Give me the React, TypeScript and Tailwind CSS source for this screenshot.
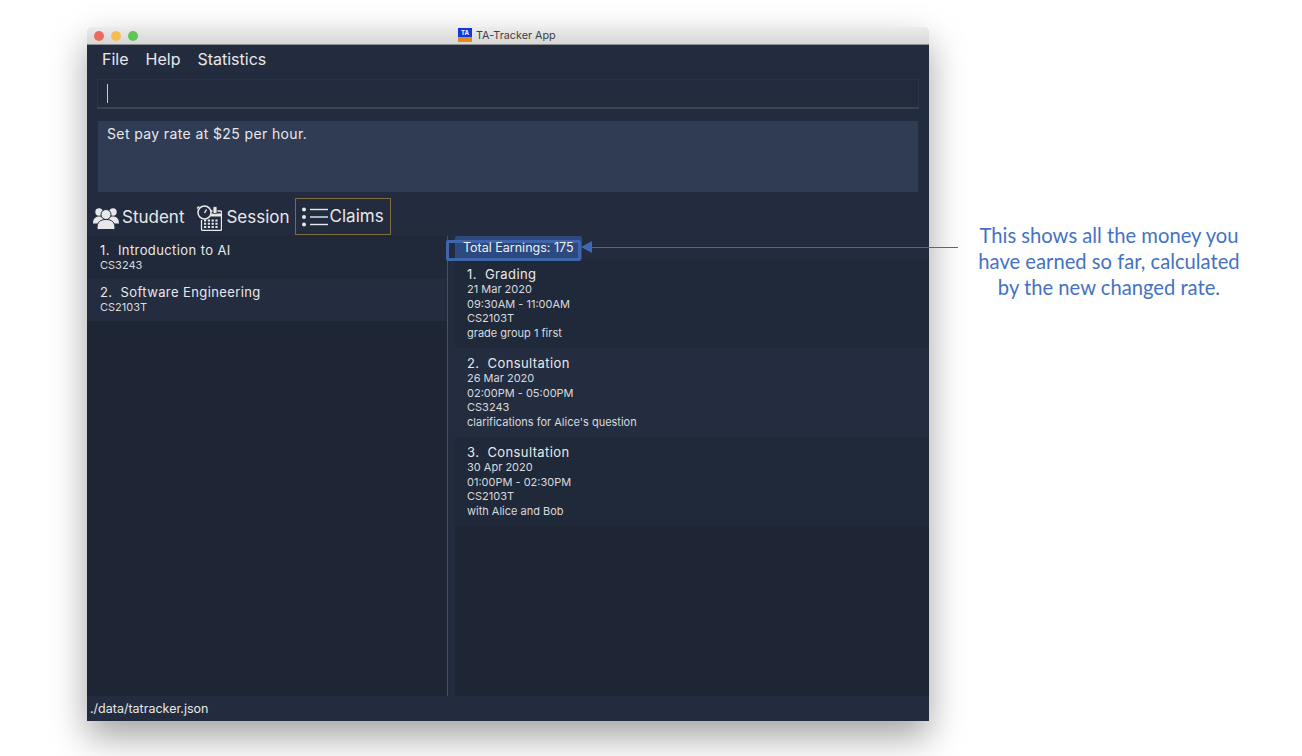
const students = [
  { title: "1.  Introduction to AI", code: "CS3243" },
  { title: "2.  Software Engineering", code: "CS2103T" },
]

const claims = [
  { title: "1.  Grading", lines: ["21 Mar 2020", "09:30AM - 11:00AM", "CS2103T", "grade group 1 first"] },
  { title: "2.  Consultation", lines: ["26 Mar 2020", "02:00PM - 05:00PM", "CS3243", "clarifications for Alice's question"] },
  { title: "3.  Consultation", lines: ["30 Apr 2020", "01:00PM - 02:30PM", "CS2103T", "with Alice and Bob"] },
]

function StudentIcon() {
  return (
    <svg width="26" height="23" viewBox="0 0 26 23" fill="#e8e8ea">
      <circle cx="6" cy="5" r="3.700" />
      <circle cx="20" cy="5" r="3.700" />
      <path d="M0 16.500C0 11.500 2.500 9.500 6 9.500c3.500 0 6 2 6 7H0z" />
      <path d="M14 16.500c0-5 2.500-7 6-7 3.500 0 6 2 6 7H14z" />
      <circle cx="13" cy="7.500" r="5" stroke="#232c3e" strokeWidth="1" />
      <path d="M5.500 22.500c-.8 0-1.500-.7-1.500-1.500 0-5.500 3-8.500 9-8.500s9 3 9 8.500c0 .8-.7 1.500-1.500 1.500h-15z" stroke="#232c3e" strokeWidth="1" />
    </svg>
  )
}

function SessionIcon() {
  return (
    <svg width="26" height="26" viewBox="0 0 26 26" fill="none" stroke="#e8e8ea" strokeWidth="1.3">
      {/* calendar */}
      <path d="M14 6h10.500a1 1 0 0 1 1 1v17a1.500 1.500 0 0 1-1.500 1.500H7A1.500 1.500 0 0 1 5.500 24v-9" />
      <path d="M15 8.500h10.500v3H13z" fill="#e8e8ea" stroke="none" />
      <rect x="17" y="1.500" width="4" height="7" rx="1" fill="#e8e8ea" stroke="#232c3e" strokeWidth="0.8" />
      <path d="M8 15.500h2.200M11.800 15.500H14M15.600 15.500h2.200M19.400 15.500h2.200M8 18.800h2.200M11.800 18.800H14M15.600 18.800h2.200M19.400 18.800h2.200M8 22h2.200M11.800 22H14M15.600 22h2.200M19.400 22h2.200" strokeWidth="2" />
      {/* stopwatch */}
      <circle cx="8.500" cy="7.500" r="6.500" fill="#232c3e" strokeWidth="1.500" />
      <path d="M10.500 4.500L8.500 8" strokeWidth="1.500" />
      <path d="M3 1.500L1 3.500" strokeWidth="1.500" />
    </svg>
  )
}

function ClaimsIcon() {
  return (
    <svg width="26" height="20" viewBox="0 0 26 20" fill="#e8e8ea">
      <circle cx="2" cy="2.500" r="2" />
      <circle cx="2" cy="10" r="2" />
      <circle cx="2" cy="17.500" r="2" />
      <rect x="8" y="1.800" width="18" height="1.400" />
      <rect x="8" y="9.300" width="18" height="1.400" />
      <rect x="8" y="16.800" width="18" height="1.400" />
    </svg>
  )
}

export default function App() {
  return (
    <div className="relative flex w-[1302px] h-[756px] overflow-hidden bg-white font-['Inter','Liberation_Sans',sans-serif]">
      {/* app window */}
      <div className="relative ml-[87px] mt-[27px] flex h-[694px] w-[842px] flex-col shadow-[0_16px_34px_rgba(0,0,0,0.36)]">
        <div className="relative flex h-[18px] items-center rounded-t-[4px] border-b border-[#8f8f8f] bg-gradient-to-b from-[#ececec] to-[#d6d6d6] pl-[7px]">
          <div className="flex gap-[7px]">
            <span className="h-[10px] w-[10px] rounded-full bg-[#ed6a5e]" />
            <span className="h-[10px] w-[10px] rounded-full bg-[#f5bf4f]" />
            <span className="h-[10px] w-[10px] rounded-full bg-[#61c554]" />
          </div>
          <div className="ml-[320px] mt-[1px] flex items-center gap-[4px] text-[10.800px] text-[#3f3f3f]">
            <span className="mt-[-2px] flex h-[14px] w-[14px] flex-col">
              <span className="flex h-[9px] items-center justify-center bg-[#1238d8] text-[6px] font-bold leading-none text-white">TA</span>
              <span className="h-[5px] bg-[#e08a1e]" />
            </span>
            <span>TA-Tracker App</span>
          </div>
        </div>

        <div className="flex min-h-0 flex-1 flex-col bg-[#232c3e] text-[#e8e8ea]">
          <div className="flex h-[28px] items-center gap-[17px] pl-[15px] text-[16px]">
            <span>File</span>
            <span>Help</span>
            <span>Statistics</span>
          </div>

          <div className="mx-[10px] mt-[6px] flex h-[30px] items-center border border-[#2b3446] border-b-2 border-b-[#3e444f] pl-[9px]">
            <span className="h-[19px] w-px bg-[#c8ccd2]" />
          </div>

          <div className="mx-[11px] mt-[12px] h-[71px] bg-[#303c53] px-[9px] pt-[3px] text-[14px] leading-[19px] tracking-[0.38px]">
            Set pay rate at $25 per hour.
          </div>

          <div className="mt-[6px] mb-[1px] flex h-[37px] items-center pl-[6px] text-[17px]">
            <div className="mt-[3px] flex items-center gap-[3px]">
              <StudentIcon />
              <span>Student</span>
            </div>
            <div className="ml-[12px] mt-[3px] flex items-center gap-[4px]">
              <SessionIcon />
              <span>Session</span>
            </div>
            <div className="ml-[5px] flex h-[37px] w-[96px] items-center gap-[2px] border border-[#7d6d3c] pl-[6px] pt-[1px]">
              <ClaimsIcon />
              <span>Claims</span>
            </div>
          </div>

          <div className="flex min-h-0 flex-1">
            <div className="w-[360px] bg-[#1e2636] pt-[1px]">
              {students.map((s, i) => (
                <div key={s.code} className={`h-[42px] pl-[13px] pt-[4px] ${i === 1 ? "bg-[#242d3f]" : "bg-[#202939]"}`}>
                  <div className="mb-[-1px] whitespace-pre text-[13px] leading-[18px] tracking-[0.4px]">{s.title}</div>
                  <div className="text-[11px] leading-[14px] text-[#d8dade]">{s.code}</div>
                </div>
              ))}
            </div>
            <div className="w-px bg-[#4a505c]" />
            <div className="w-[7px]" />
            <div className="flex flex-1 flex-col">
              <div className="relative z-10 flex h-[23px] items-center pl-[8px] pt-[1px] text-[12.500px] text-[#eef0f4]">Total Earnings: 175</div>
              <div className="flex-1 bg-[#1e2636]">
                {claims.map((c, i) => (
                  <div key={c.title} className={`h-[89px] pl-[12px] pt-[6px] ${i === 1 ? "bg-[#242d3f]" : "bg-[#202939]"}`}>
                    <div className="mb-[-1px] whitespace-pre text-[13px] leading-[18px] tracking-[0.4px]">{c.title}</div>
                    {c.lines.map((l) => (
                      <div key={l} className="text-[11px] leading-[14.500px] text-[#d8dade]">{l}</div>
                    ))}
                  </div>
                ))}
              </div>
            </div>
          </div>

          <div className="flex h-[25px] items-center pl-[3px] pt-[1px] text-[12.500px]">./data/tatracker.json</div>
        </div>

        {/* highlight round the total */}
        <div className="absolute left-[368px] top-[209px] h-[24px] w-[127px] rounded-[2px] bg-[#2c4a80]" />
        <div className="absolute left-[359px] top-[213px] h-[21px] w-[135px] rounded-[2px] border-[3px] border-[#3f66ad]" />
      </div>

      {/* pointer line */}
      <div className="absolute left-[581px] top-[240px] flex h-[14px] w-[377px] items-center">
        <span className="h-0 w-0 border-y-[6px] border-r-[11px] border-y-transparent border-r-[#4169b3]" />
        <span className="h-px flex-1 bg-[#4169b3]" />
      </div>

      <p className="ml-[43px] mt-[222px] w-[274px] text-center font-['Lato',sans-serif] text-[20.200px] leading-[26px] text-[#4472c4]">
        This shows all the money you have earned so far, calculated by the new changed rate.
      </p>
    </div>
  )
}
